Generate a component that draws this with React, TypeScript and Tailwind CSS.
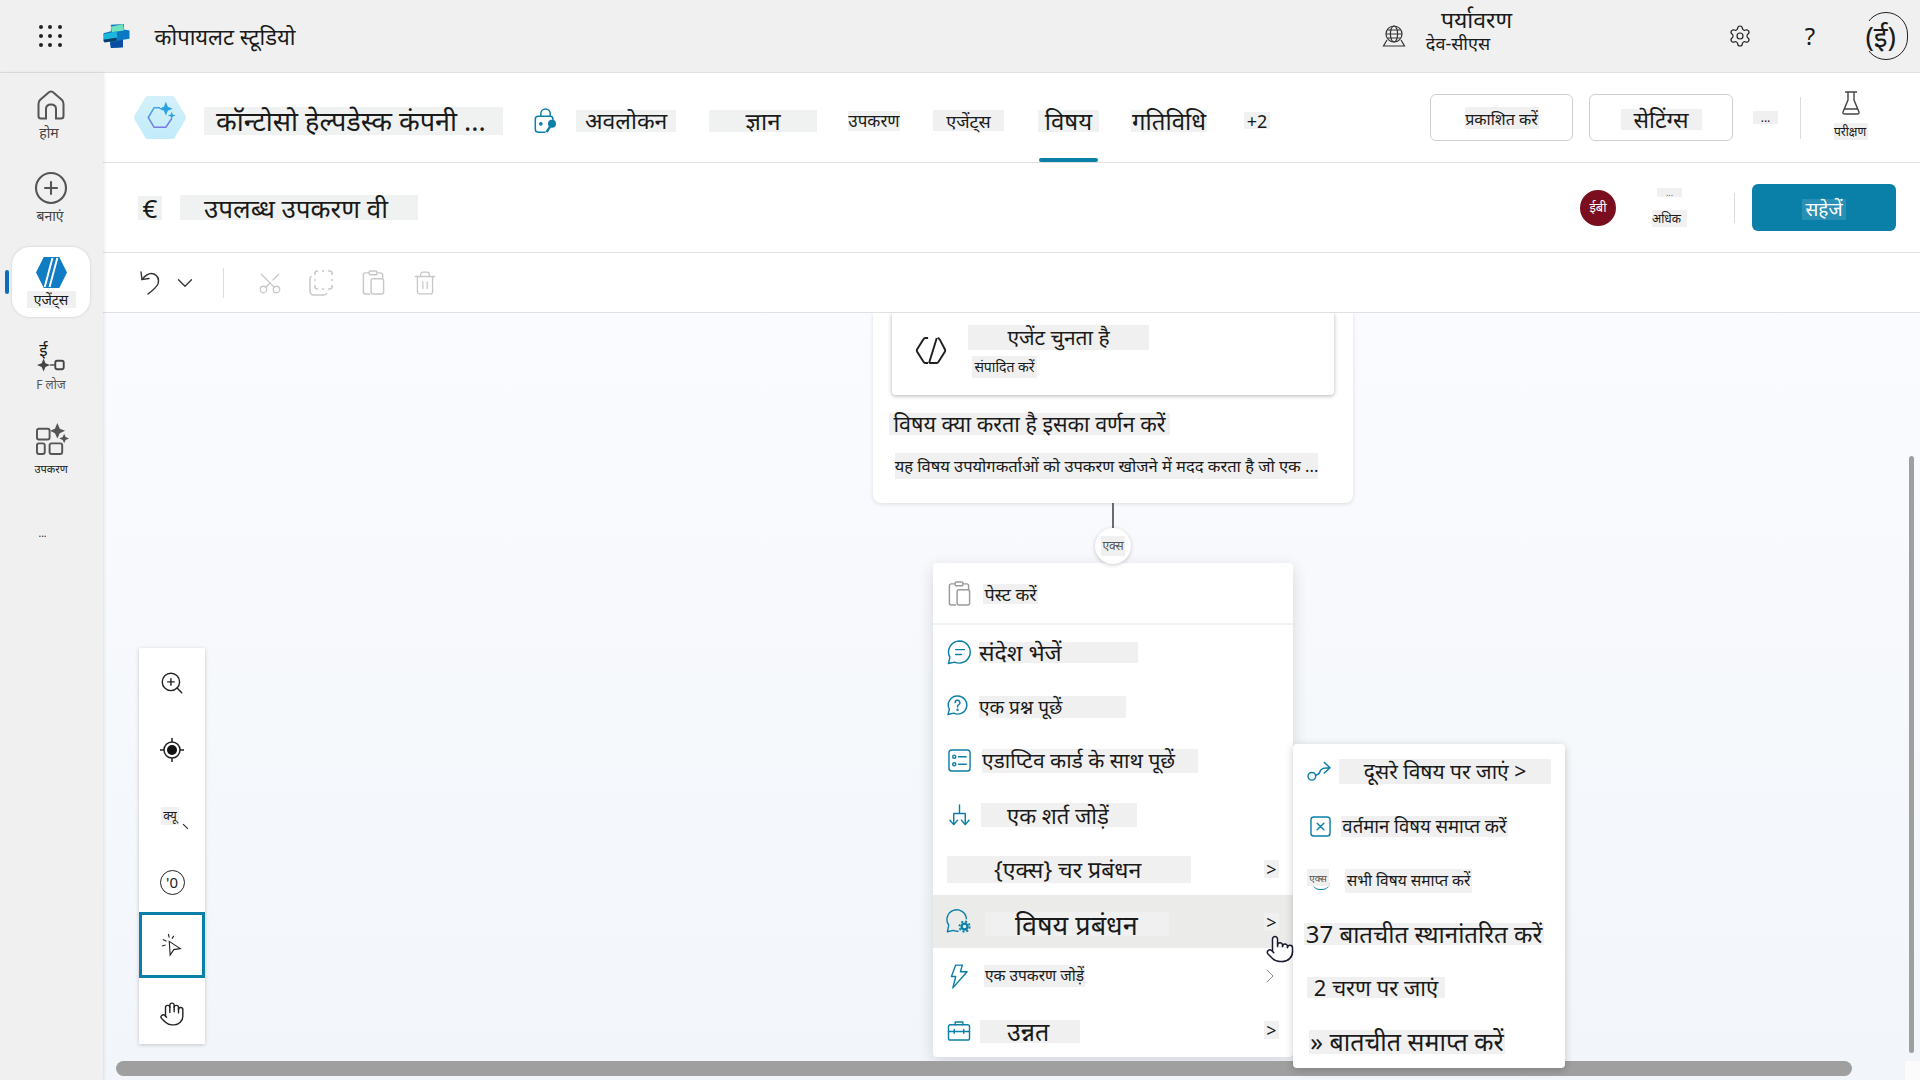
import type { ReactNode } from "react";
import { ChevronDown, ChevronRight, CirclePlus, Hand, Pointer, Scissors, Settings, Trash2, ZoomIn } from "lucide-react";

// Grey box behind machine translated labels
function Patch({ className = "", children }: { className?: string; children?: ReactNode }) {
  return (
    <span className={`inline-flex items-center shrink-0 whitespace-nowrap leading-none bg-[#f0f0f0] text-[#1a1a1a] ${className}`}>
      {children}
    </span>
  );
}

function CopilotLogo() {
  return (
    <svg viewBox="0 0 30 28" className="w-[29px] h-[26px] shrink-0">
      <path d="M9 2 L23 1 L23 7 L29 8 L29 17 L22 18 L22 26 L9 27 L8 20 L1 20 L1 11 L9 9 Z" fill="#0a78c2" />
      <path d="M9 4 L22 1 L23 8 L10 10 Z" fill="#6fe3bd" />
      <path d="M1 12 L15 9 L16 16 L2 18 Z" fill="#1cb5dc" />
      <path d="M8 21 L22 18 L22 26 L9 27 Z" fill="#0a4da3" />
      <path d="M1 18 L15 16 L15 19 L2 21 Z" fill="#0d3f66" />
    </svg>
  );
}

function AgentBadge() {
  return (
    <svg viewBox="0 0 54 46" className="w-[54px] h-[45px] shrink-0">
      <defs>
        <linearGradient id="hexFill" x1="0" y1="0" x2="0" y2="1">
          <stop offset="0" stopColor="#d3f1fb" />
          <stop offset="1" stopColor="#c2ebfa" />
        </linearGradient>
        <linearGradient id="hexStroke" x1="0" y1="0" x2="0" y2="1">
          <stop offset="0" stopColor="#3ba7e6" />
          <stop offset="1" stopColor="#7d78e0" />
        </linearGradient>
      </defs>
      <path d="M15 1 H39 Q42 1 43 4 L53 21 Q54 23 53 25 L43 42 Q42 45 39 45 H15 Q12 45 11 42 L1 25 Q0 23 1 21 L11 4 Q12 1 15 1 Z" fill="url(#hexFill)" />
      <path d="M27 13 H21 L15 23 L21 33 H33 L39 24" fill="none" stroke="url(#hexStroke)" strokeWidth="1.6" />
      <path d="M33 7 L35 12 L40 14 L35 16 L33 21 L31 16 L26 14 L31 12 Z" fill="#2aa3e0" />
      <path d="M39 17 L40 20 L43 21 L40 22 L39 25 L38 22 L35 21 L38 20 Z" fill="#2aa3e0" />
    </svg>
  );
}

function AgentsIcon() {
  return (
    <svg viewBox="0 0 32 34" className="w-[31px] h-[33px]">
      <path d="M8 1 H24 L32 17 L24 33 H8 L0 17 Z" fill="#0f7cc4" />
      <path d="M9 32 L17 2 M14 32 L22 2" stroke="#ffffff" strokeWidth="2" />
    </svg>
  );
}

function HomeIcon() {
  return (
    <svg viewBox="0 0 28 30" className="w-[28px] h-[30px]" fill="none" stroke="#555" strokeWidth="2">
      <path d="M14 1.5 Q12.5 1.5 11 3 L3 10 Q1.5 11.5 1.5 14 V26 Q1.5 28.5 4 28.5 H9 V19 Q9 14.5 14 14.5 Q19 14.5 19 19 V28.5 H24 Q26.5 28.5 26.5 26 V14 Q26.5 11.5 25 10 L17 3 Q15.5 1.5 14 1.5 Z" />
    </svg>
  );
}

function EnvIcon() {
  return (
    <svg viewBox="0 0 24 22" className="w-[24px] h-[22px]" fill="none" stroke="#333" strokeWidth="1.2">
      <circle cx="12" cy="9" r="8" />
      <ellipse cx="12" cy="9" rx="3.6" ry="8" />
      <path d="M4 9 H20 M5.5 5 H18.5 M5.5 13 H18.5" />
      <path d="M5 15 L1.5 21 H22.5 L19 15" />
    </svg>
  );
}

function FlaskIcon() {
  return (
    <svg viewBox="0 0 20 24" className="w-[20px] h-[24px]" fill="none" stroke="#444" strokeWidth="1.4">
      <path d="M4 1 H16 M7 1 V9 L2 21 Q1.5 23 4 23 H16 Q18.5 23 18 21 L13 9 V1 M3.5 18 H16.5" />
    </svg>
  );
}

function UndoIcon() {
  return (
    <svg viewBox="0 0 21 25" className="w-[21px] h-[25px]" fill="none" stroke="#333" strokeWidth="1.4" strokeLinecap="round">
      <path d="M1 2 L2 9.5 L9 8.5" />
      <path d="M2 9.5 Q8 2 14 4 Q20 7 18 14 Q16 18 8 24" />
    </svg>
  );
}

function CopyIcon() {
  return (
    <svg viewBox="0 0 24 26" className="w-[24px] h-[26px]" fill="none" stroke="#c8c8c8" strokeWidth="1.5">
      <path d="M8 1 H9 M13 1 H15 M19 1 H21 Q23 1 23 3 V5 M23 9 V11 M23 15 V17 Q23 19 21 19 H19 M13 19 H15 M8 19 H9 Q6 19 6 17 V15 M6 11 V9 M6 5 V3 Q6 1 8 1" />
      <path d="M2.5 6 Q1 7 1 9 V21 Q1 25 5 25 H15 Q17 25 18 23" />
    </svg>
  );
}

function PasteIcon({ color }: { color: string }) {
  return (
    <svg viewBox="0 0 23 26" className="w-[23px] h-[25px]" fill="none" stroke={color} strokeWidth="1.5">
      <path d="M7 3 H3 Q1 3 1 5 V23 Q1 25 3 25 H8" />
      <path d="M15 3 H19 Q21 3 21 5 V9" />
      <rect x="7" y="1" width="8" height="4" rx="1.2" />
      <rect x="9" y="9" width="13" height="16" rx="2" />
    </svg>
  );
}

function LockKeyIcon() {
  return (
    <svg viewBox="0 0 26 28" className="w-[25px] h-[26px] shrink-0" fill="none" stroke="#0a7fa8" strokeWidth="1.6">
      <path d="M8 9 V6 a5 5 0 0 1 10 0 V9" />
      <path d="M13 26 H5 a3 3 0 0 1 -3 -3 V12 a3 3 0 0 1 3 -3 H18 a3 3 0 0 1 3 3 V13" />
      <circle cx="8" cy="17" r="1.2" fill="#0a7fa8" />
      <circle cx="20" cy="17" r="3.5" fill="#0a7fa8" />
      <path d="M18 20 L14 26" strokeWidth="2.6" />
    </svg>
  );
}

function CodeHexIcon() {
  return (
    <svg viewBox="0 0 32 28" className="w-[32px] h-[27px]" fill="none" stroke="#1f1f1f" strokeWidth="2" strokeLinejoin="round">
      <path d="M13 1 H10 Q9 1 8 2.5 L1.5 13 Q1 14 1.5 15 L8 25.5 Q9 27 10 27 H13" />
      <path d="M23 1 Q24 1 25 2.5 L30.5 13 Q31 14 30.5 15 L24 25.5 Q23 27 22 27 H14 M22 1 L14 27" />
    </svg>
  );
}

function BlueIcon({ name }: { name: string }) {
  const common = { fill: "none", stroke: "#0a7fa8", strokeWidth: 1.5, strokeLinecap: "round" as const, strokeLinejoin: "round" as const };
  if (name === "message") {
    return (
      <svg viewBox="0 0 26 26" className="w-[25px] h-[25px]" {...common}>
        <path d="M13 1 a11.5 11.5 0 1 1 -5 22 L1.5 24.5 L3 18 A11.5 11.5 0 0 1 13 1 Z" />
        <path d="M9 10 H18 M9 15 H15" />
      </svg>
    );
  }
  if (name === "question") {
    return (
      <svg viewBox="0 0 22 22" className="w-[21px] h-[21px]" {...common}>
        <path d="M11 1 a9.5 9.5 0 1 1 -4 18 L1 20.5 L2.5 15 A9.5 9.5 0 0 1 11 1 Z" />
        <path d="M8.5 8 a2.5 2.5 0 1 1 3.5 2.3 Q11 11 11 12.5" />
        <circle cx="11" cy="15.5" r="0.5" />
      </svg>
    );
  }
  if (name === "card") {
    return (
      <svg viewBox="0 0 24 24" className="w-[23px] h-[23px]" {...common}>
        <rect x="1" y="1" width="22" height="22" rx="3" />
        <circle cx="6.5" cy="8" r="1.6" />
        <circle cx="6.5" cy="16" r="1.6" />
        <path d="M11 8 H19 M11 16 H19" />
      </svg>
    );
  }
  if (name === "branch") {
    return (
      <svg viewBox="0 0 24 24" className="w-[23px] h-[23px]" {...common}>
        <path d="M12 1 V10 M6 21 V10 H18 V21" />
        <path d="M2 17 L6 21.5 L10 17 M14 17 L18 21.5 L22 17" />
      </svg>
    );
  }
  if (name === "topic") {
    return (
      <svg viewBox="0 0 28 26" className="w-[27px] h-[25px]" {...common}>
        <path d="M22 10 A10.5 10.5 0 1 0 3 17 L1.5 24 L8 22.5 Q10 23.5 13 23.5" />
        <circle cx="20" cy="18.5" r="5.5" fill="none" stroke="#0a7fa8" strokeWidth="2" strokeDasharray="2.2 2.1" strokeLinecap="butt" />
        <circle cx="20" cy="18.5" r="3.2" fill="none" stroke="#0a7fa8" strokeWidth="2.6" />
      </svg>
    );
  }
  if (name === "bolt") {
    return (
      <svg viewBox="0 0 20 26" className="w-[19px] h-[25px]" {...common}>
        <path d="M6 1 H13 L11 8 H18 L3 25 L6 13 H1.5 Z" />
      </svg>
    );
  }
  if (name === "case") {
    return (
      <svg viewBox="0 0 24 22" className="w-[24px] h-[21px]" {...common}>
        <rect x="1" y="5" width="22" height="16" rx="2" />
        <path d="M8 5 V2 H16 V5 M1 12 H23 M7 10 V14 M17 10 V14" />
      </svg>
    );
  }
  if (name === "redirect") {
    return (
      <svg viewBox="0 0 26 22" className="w-[25px] h-[21px]" {...common}>
        <circle cx="5" cy="16" r="4" />
        <path d="M9 15 Q13 14 14 10 Q15 7 24 7 M18 1.5 L24 7 L18 12.5" />
      </svg>
    );
  }
  return (
    <svg viewBox="0 0 22 22" className="w-[21px] h-[21px]" {...common}>
      <rect x="1" y="1" width="20" height="20" rx="3" />
      <path d="M7.5 7.5 L14.5 14.5 M14.5 7.5 L7.5 14.5" />
    </svg>
  );
}

function RailItem({ icon, label, labelClass }: { icon: ReactNode; label: string; labelClass: string }) {
  return (
    <div className="flex flex-col items-center">
      {icon}
      <Patch className={`justify-center bg-[#e8e8e8] text-[14px] text-[#444] ${labelClass}`}>{label}</Patch>
    </div>
  );
}

function Rail() {
  return (
    <aside className="relative z-10 w-[103px] shrink-0 bg-[#f0f0f0] shadow-[1px_0_3px_rgba(0,0,0,0.1)] pt-[17px] pr-[1px] flex flex-col items-center">
      <RailItem icon={<HomeIcon />} label="होम" labelClass="w-[41px] h-[15px] mt-[5px] -ml-[4px]" />
      <div className="mt-[30px]">
        <RailItem
          icon={<CirclePlus className="w-[36px] h-[36px] text-[#555]" strokeWidth={1.4} />}
          label="बनाएं"
          labelClass="w-[45px] h-[14px] mt-[3px] -ml-[2px]"
        />
      </div>
      <div className="relative mt-[24px] w-[78px] h-[70px] rounded-[18px] bg-white shadow-[0_0_3px_rgba(0,0,0,0.15)] flex flex-col items-center pt-[9px]">
        <span className="absolute -left-[7px] top-[23px] w-[4px] h-[24px] rounded bg-[#0f6cbd]" />
        <AgentsIcon />
        <Patch className="justify-center w-[49px] h-[17px] text-[14px] mt-[2px]">एजेंट्स</Patch>
      </div>
      <div className="mt-[22px] flex flex-col items-center">
        <Patch className="justify-center w-[15px] h-[21px] text-[17px] bg-[#e8e8e8] -ml-[15px]">ई</Patch>
        <svg viewBox="0 0 32 14" className="w-[30px] h-[14px] -mt-[2px] ml-[2px]">
          <path d="M7 0 L9 5 L14 7 L9 9 L7 14 L5 9 L0 7 L5 5 Z" fill="#444" />
          <path d="M14 7 H19" stroke="#444" strokeWidth="1.5" />
          <rect x="19.5" y="2.5" width="9" height="9" rx="2" fill="none" stroke="#444" strokeWidth="2" />
        </svg>
        <Patch className="justify-center w-[37px] h-[11px] text-[12px] bg-[#e8e8e8] mt-[7px] text-[#555]">F लोज</Patch>
      </div>
      <div className="mt-[33px] flex flex-col items-center">
        <svg viewBox="0 0 34 33" className="w-[33px] h-[32px] ml-[3px]" fill="none" stroke="#555" strokeWidth="2">
          <rect x="1" y="6" width="13" height="11" rx="2" />
          <rect x="1" y="21" width="8" height="11" rx="2" />
          <rect x="14" y="21" width="13" height="11" rx="2" />
          <path d="M22 0 L24.5 6 L30 8 L24.5 10.5 L22 16 L19.5 10.5 L14.5 8 L19.5 6 Z" fill="#555" stroke="none" />
          <path d="M29 11 L30.5 14.5 L34 16 L30.5 17.5 L29 21 L27.5 17.5 L24 16 L27.5 14.5 Z" fill="#555" stroke="none" />
        </svg>
        <Patch className="justify-center w-[32px] h-[12px] text-[11px] bg-[#e8e8e8] mt-[7px]">उपकरण</Patch>
      </div>
      <Patch className="justify-start pl-[2px] w-[27px] h-[10px] text-[10px] bg-[#e8e8e8] mt-[54px] -ml-[2px]">...</Patch>
    </aside>
  );
}

function TopBar() {
  return (
    <header className="h-[73px] shrink-0 bg-[#f0f0f0] border-b border-[#e0e0e0] flex items-center">
      <div className="ml-[39px] grid grid-cols-3 gap-[5px] w-[23px]">
        {[1, 2, 3, 4, 5, 6, 7, 8, 9].map((n) => (
          <span key={n} className="w-[4px] h-[4px] rounded-full bg-[#222]" />
        ))}
      </div>
      <div className="ml-[40px]">
        <CopilotLogo />
      </div>
      <Patch className="ml-[14px] w-[160px] h-[26px] justify-center text-[22px] bg-[#e8e8e8]">कोपायलट स्टूडियो</Patch>
      <div className="ml-auto flex items-center">
        <EnvIcon />
        <div className="ml-[18px] flex flex-col items-start -mt-[11px]">
          <Patch className="ml-[4px] w-[97px] h-[22px] justify-center text-[23px] bg-[#e8e8e8]">पर्यावरण</Patch>
          <Patch className="mt-[3px] w-[68px] h-[20px] justify-center text-[18px] bg-[#e8e8e8]">देव-सीएस</Patch>
        </div>
        <Settings className="ml-[203px] w-[24px] h-[24px] text-[#222]" strokeWidth={1.2} />
        <Patch className="ml-[46px] w-[24px] h-[24px] justify-center text-[24px] bg-[#e8e8e8]">?</Patch>
        <div className="relative ml-[30px] mr-[12px] w-[56px] h-[48px]">
          <span className="absolute right-0 top-0 w-[44px] h-[48px] rounded-full border border-[#222]" />
          <Patch className="absolute left-0 top-[9px] w-[44px] h-[30px] justify-end text-[28px] bg-[#ececec]">(ई)</Patch>
        </div>
      </div>
    </header>
  );
}

function TabsRow() {
  return (
    <div className="h-[90px] shrink-0 border-b border-[#e0e0e0] bg-white flex items-center relative">
      <div className="ml-[30px]">
        <AgentBadge />
      </div>
      <div className="flex items-center pt-[6px]">
        <Patch className="ml-[17px] w-[299px] h-[28px] pl-[12px] text-[27px] bg-[#f0f2f1]">कॉन्टोसो हेल्पडेस्क कंपनी ...</Patch>
        <div className="ml-[30px]">
          <LockKeyIcon />
        </div>
        <Patch className="ml-[18px] w-[100px] h-[22px] pl-[9px] text-[23px] bg-[#f0f2f1]">अवलोकन</Patch>
        <Patch className="ml-[33px] w-[108px] h-[22px] justify-center text-[24px] bg-[#f0f2f1]">ज्ञान</Patch>
        <Patch className="ml-[31px] w-[52px] h-[20px] justify-center text-[17px] bg-[#f0f2f1]">उपकरण</Patch>
        <Patch className="ml-[33px] w-[71px] h-[21px] justify-center text-[18px]">एजेंट्स</Patch>
        <div className="relative ml-[34px] h-[22px]">
          <Patch className="w-[61px] h-[22px] justify-center text-[24px] bg-[#f0f2f1]">विषय</Patch>
          <span className="absolute left-[1px] top-[48px] w-[59px] h-[4px] rounded-sm bg-[#0a7fa8]" />
        </div>
        <Patch className="ml-[32px] w-[76px] h-[22px] justify-center text-[24px] bg-[#f0f2f1]">गतिविधि</Patch>
        <Patch className="ml-[37px] w-[26px] h-[17px] justify-center text-[18px] bg-[#f0f2f1]">+2</Patch>
      </div>

      <div className="ml-auto flex items-center pr-[52px]">
        <button className="w-[143px] h-[47px] rounded-[6px] border border-[#cfcfcf] bg-white flex items-center justify-center">
          <Patch className="w-[74px] h-[22px] pt-[2px] justify-center text-[16px]">प्रकाशित करें</Patch>
        </button>
        <button className="ml-[16px] w-[144px] h-[47px] rounded-[6px] border border-[#cfcfcf] bg-white flex items-center justify-center pt-[3px]">
          <Patch className="w-[81px] h-[21px] justify-center text-[23px]">सेटिंग्स</Patch>
        </button>
        <Patch className="ml-[20px] w-[25px] h-[13px] justify-center text-[12px]">...</Patch>
        <span className="ml-[22px] w-px h-[42px] bg-[#dcdcdc]" />
        <div className="ml-[33px] flex flex-col items-center -mt-[4px]">
          <FlaskIcon />
          <Patch className="mt-[8px] w-[34px] h-[17px] justify-start text-[12px]">परीक्षण</Patch>
        </div>
      </div>
    </div>
  );
}

function TitleRow() {
  return (
    <div className="h-[90px] shrink-0 border-b border-[#e0e0e0] bg-white flex items-center">
      <Patch className="ml-[35px] w-[24px] h-[24px] justify-center text-[26px] bg-[#f0f2f1]">€</Patch>
      <Patch className="ml-[18px] w-[238px] h-[25px] pl-[24px] pt-[1px] text-[26px] bg-[#f0f2f1]">उपलब्ध उपकरण वी</Patch>
      <div className="ml-auto flex items-center pr-[24px]">
        <span className="w-[36px] h-[36px] rounded-full bg-[#7a0e1f] flex items-center justify-center text-[13px] text-white">ईबी</span>
        <div className="ml-[36px] w-[35px] flex flex-col items-center">
          <Patch className="w-[25px] h-[9px] justify-center text-[9px] text-[#666]">...</Patch>
          <Patch className="mt-[13px] w-[35px] h-[17px] justify-start text-[12px]">अधिक</Patch>
        </div>
        <span className="ml-[47px] w-px h-[30px] bg-[#dcdcdc]" />
        <button className="ml-[17px] w-[144px] h-[47px] rounded-[6px] bg-[#0a7fa8] flex items-center justify-center pt-[3px]">
          <span className="px-[3px] bg-[#2a8fb4] text-white text-[19px] leading-[21px]">सहेजें</span>
        </button>
      </div>
    </div>
  );
}

function EditToolbar() {
  return (
    <div className="h-[60px] shrink-0 border-b border-[#e0e0e0] bg-white flex items-center">
      <div className="ml-[37px]">
        <UndoIcon />
      </div>
      <ChevronDown className="ml-[11px] w-[26px] h-[26px] text-[#333]" strokeWidth={1.2} />
      <span className="ml-[25px] w-px h-[30px] bg-[#dcdcdc]" />
      <Scissors className="ml-[33px] w-[26px] h-[26px] text-[#c8c8c8] -rotate-90" strokeWidth={1.2} />
      <div className="ml-[26px]">
        <CopyIcon />
      </div>
      <div className="ml-[29px]">
        <PasteIcon color="#c8c8c8" />
      </div>
      <Trash2 className="ml-[27px] w-[26px] h-[26px] text-[#c8c8c8]" strokeWidth={1.2} />
    </div>
  );
}

function ZoomStrip() {
  return (
    <div className="absolute left-[36px] top-[335px] w-[66px] h-[396px] bg-white shadow-[0_1px_4px_rgba(0,0,0,0.2)] flex flex-col items-center">
      <div className="h-[68px] pt-[2px] flex items-center justify-center">
        <ZoomIn className="w-[26px] h-[26px] text-[#222]" strokeWidth={1.3} />
      </div>
      <div className="h-[68px] flex items-center justify-center">
        <svg viewBox="0 0 24 24" className="w-[24px] h-[24px]" fill="none" stroke="#222" strokeWidth="1.5">
          <circle cx="12" cy="12" r="8" />
          <circle cx="12" cy="12" r="5" fill="#111" stroke="none" />
          <path d="M12 0 V4 M12 20 V24 M0 12 H4 M20 12 H24" />
        </svg>
      </div>
      <div className="relative h-[64px] flex items-center justify-center">
        <Patch className="w-[18px] h-[18px] justify-center text-[12px] -ml-[4px]">क्यू</Patch>
        <span className="absolute left-[17px] top-[42px] w-[7px] h-px bg-[#222] rotate-45" />
      </div>
      <div className="h-[64px] pt-[4px] flex items-center justify-center">
        <span className="w-[25px] h-[25px] rounded-full border-[1.5px] border-[#222] flex items-center justify-center text-[15px] text-[#222]">'0</span>
      </div>
      <div className="w-[66px] h-[66px] border-[3px] border-[#0a7fa8] flex items-center justify-center">
        <svg viewBox="0 0 24 26" className="w-[22px] h-[24px]" fill="none" stroke="#222" strokeWidth="1.2">
          <path d="M9 9 L21 17 L14 18 L10 24 Z" />
          <path d="M2 7 L6 9 M8 1 L9 5 M1 14 L5 13 M14 3 L12 6" />
        </svg>
      </div>
      <div className="h-[66px] pt-[5px] flex items-center justify-center">
        <Hand className="w-[26px] h-[26px] text-[#222]" strokeWidth={1.3} />
      </div>
    </div>
  );
}

function TopicCard() {
  return (
    <div className="absolute left-[770px] top-0 w-[480px] h-[190px] rounded-b-[8px] bg-white shadow-[0_1px_4px_rgba(0,0,0,0.12)] flex flex-col">
      <div className="ml-[19px] w-[442px] h-[82px] rounded-b-[4px] bg-white shadow-[0_1px_4px_rgba(0,0,0,0.3)] flex">
        <div className="ml-[23px] mt-[24px]">
          <CodeHexIcon />
        </div>
        <div className="ml-[21px] flex flex-col items-start">
          <Patch className="mt-[12px] w-[181px] h-[25px] justify-center text-[21px]">एजेंट चुनता है</Patch>
          <Patch className="mt-[6px] ml-[4px] w-[65px] h-[22px] justify-center text-[14px]">संपादित करें</Patch>
        </div>
      </div>
      <Patch className="mt-[18px] ml-[16px] w-[281px] h-[22px] justify-center text-[21.5px] self-start">विषय क्या करता है इसका वर्णन करें</Patch>
      <Patch className="mt-[18px] ml-[22px] w-[423px] h-[26px] justify-center text-[16.5px] self-start">यह विषय उपयोगकर्ताओं को उपकरण खोजने में मदद करता है जो एक ...</Patch>
    </div>
  );
}

function MenuRow({
  icon,
  className = "",
  chevron,
  children,
}: {
  icon?: ReactNode;
  className?: string;
  chevron?: ReactNode;
  children: ReactNode;
}) {
  return (
    <div className={`flex items-center relative ${className}`}>
      {icon && <div className="absolute left-[13px] w-[26px] flex justify-center">{icon}</div>}
      {children}
      {chevron && <div className="absolute right-[14px] flex items-center">{chevron}</div>}
    </div>
  );
}

function Gt({ dark = false }: { dark?: boolean }) {
  return (
    <Patch className={`w-[15px] h-[18px] justify-center text-[18px] ${dark ? "bg-[#e0e0de]" : ""}`}>&gt;</Patch>
  );
}

function AddMenu() {
  return (
    <div className="absolute left-[830px] top-[250px] w-[360px] h-[494px] rounded-[4px] bg-white shadow-[0_4px_16px_rgba(0,0,0,0.14)] flex flex-col">
      <MenuRow className="h-[62px] border-b-[2px] border-[#f2f2f2]" icon={<PasteIcon color="#9a9a9a" />}>
        <Patch className="ml-[50px] mt-[2px] w-[55px] h-[20px] justify-center text-[18px]">पेस्ट करें</Patch>
      </MenuRow>
      <MenuRow className="h-[55px]" icon={<BlueIcon name="message" />}>
        <Patch className="ml-[46px] w-[159px] h-[21px] justify-start text-[23px]">संदेश भेजें</Patch>
      </MenuRow>
      <MenuRow className="h-[54px]" icon={<div className="-ml-[4px] -mt-[4px]"><BlueIcon name="question" /></div>}>
        <Patch className="ml-[46px] w-[147px] h-[22px] justify-start text-[19px]">एक प्रश्न पूछें</Patch>
      </MenuRow>
      <MenuRow className="h-[53px]" icon={<BlueIcon name="card" />}>
        <Patch className="ml-[49px] w-[216px] h-[24px] justify-start text-[21px]">एडाप्टिव कार्ड के साथ पूछें</Patch>
      </MenuRow>
      <MenuRow className="h-[56px]" icon={<BlueIcon name="branch" />}>
        <Patch className="ml-[48px] w-[156px] h-[24px] pl-[26px] text-[22px]">एक शर्त जोड़ें</Patch>
      </MenuRow>
      <MenuRow className="h-[52px]" chevron={<Gt />}>
        <Patch className="ml-[14px] w-[244px] h-[27px] pl-[47px] text-[23px]">{"{एक्स} चर प्रबंधन"}</Patch>
      </MenuRow>
      <MenuRow className="h-[53px] bg-[#ebebea]" icon={<BlueIcon name="topic" />} chevron={<Gt dark />}>
        <Patch className="ml-[52px] mt-[5px] w-[184px] h-[24px] pl-[30px] text-[27px] bg-[#e0e0de]">विषय प्रबंधन</Patch>
      </MenuRow>
      <MenuRow
        className="h-[56px]"
        icon={<BlueIcon name="bolt" />}
        chevron={<ChevronRight className="w-[24px] h-[24px] -mr-[3px] text-[#8a8a8a]" strokeWidth={1} />}
      >
        <Patch className="ml-[51px] w-[101px] h-[22px] justify-center text-[15.5px]">एक उपकरण जोड़ें</Patch>
      </MenuRow>
      <MenuRow className="h-[52px]" icon={<BlueIcon name="case" />} chevron={<Gt />}>
        <Patch className="ml-[47px] mt-[2px] w-[100px] h-[23px] pl-[27px] text-[25px]">उन्नत</Patch>
      </MenuRow>
    </div>
  );
}

function SubMenu() {
  return (
    <div className="absolute left-[1190px] top-[431px] z-20 w-[272px] h-[324px] rounded-[4px] bg-white shadow-[0_2px_8px_rgba(0,0,0,0.2)] flex flex-col">
      <div className="h-[55px] flex items-center">
        <div className="ml-[14px]">
          <BlueIcon name="redirect" />
        </div>
        <Patch className="ml-[7px] w-[212px] h-[25px] justify-center text-[21px]">दूसरे विषय पर जाएं &gt;</Patch>
      </div>
      <div className="h-[55px] flex items-center">
        <div className="ml-[17px]">
          <BlueIcon name="cross" />
        </div>
        <Patch className="ml-[10px] w-[167px] h-[21px] justify-center text-[18.5px]">वर्तमान विषय समाप्त करें</Patch>
      </div>
      <div className="h-[51px] flex items-center">
        <div className="relative ml-[14px] w-[23px] h-[21px]">
          <span className="absolute left-[5px] top-[1px] w-[18px] h-[20px] rounded-[8px] border-b-[1.5px] border-[#0a7fa8]" />
          <Patch className="absolute left-0 top-0 w-[22px] h-[17px] justify-center text-[10px] text-[#555]">एक्स</Patch>
        </div>
        <Patch className="ml-[15px] mt-[2px] w-[127px] h-[24px] justify-center text-[15.5px]">सभी विषय समाप्त करें</Patch>
      </div>
      <div className="h-[55px] flex items-center">
        <Patch className="ml-[11px] mt-[2px] w-[240px] h-[22px] justify-center text-[24px]">37 बातचीत स्थानांतरित करें</Patch>
      </div>
      <div className="h-[55px] flex items-center">
        <Patch className="ml-[14px] -mt-[1px] w-[138px] h-[21px] justify-center text-[22px]">2 चरण पर जाएं</Patch>
      </div>
      <div className="h-[50px] flex items-center">
        <Patch className="ml-[16px] mt-[3px] w-[196px] h-[24px] justify-center text-[25px]">» बातचीत समाप्त करें</Patch>
      </div>
    </div>
  );
}

function Canvas() {
  return (
    <div className="relative flex-1 overflow-hidden bg-gradient-to-b from-[#fafbfe] to-[#f2f6fa]">
      <TopicCard />
      <span className="absolute left-[1009px] top-[190px] w-[2px] h-[25px] bg-[#6b6b6b]" />
      <div className="absolute left-[992px] top-[215px] z-10 w-[36px] h-[36px] rounded-full bg-white shadow-[0_1px_4px_rgba(0,0,0,0.2)] flex items-center justify-center">
        <Patch className="w-[24px] h-[20px] justify-center text-[12px] text-[#555]">एक्स</Patch>
      </div>
      <ZoomStrip />
      <AddMenu />
      <SubMenu />
      <div className="absolute left-[13px] top-[748px] w-[1736px] h-[15px] rounded-full bg-[#9f9f9f]" />
      <div className="absolute left-[1806px] top-[143px] w-[5px] h-[597px] rounded-full bg-[#9f9f9f]" />
      <div className="absolute left-[1802px] top-[748px] w-[15px] h-[19px] bg-[#fbfbfb]" />
      <Pointer className="absolute left-[1162px] top-[619px] z-30 w-[30px] h-[34px] text-[#1a1a2e] fill-white" strokeWidth={1.2} />
    </div>
  );
}

export default function App() {
  return (
    <div className="w-[1920px] h-[1080px] overflow-hidden flex flex-col bg-white font-['Noto_Sans','Noto_Sans_Devanagari','Lohit_Devanagari','Mangal',sans-serif]">
      <TopBar />
      <div className="flex flex-1 min-h-0">
        <Rail />
        <main className="flex-1 min-w-0 flex flex-col">
          <TabsRow />
          <TitleRow />
          <EditToolbar />
          <Canvas />
        </main>
      </div>
    </div>
  );
}
